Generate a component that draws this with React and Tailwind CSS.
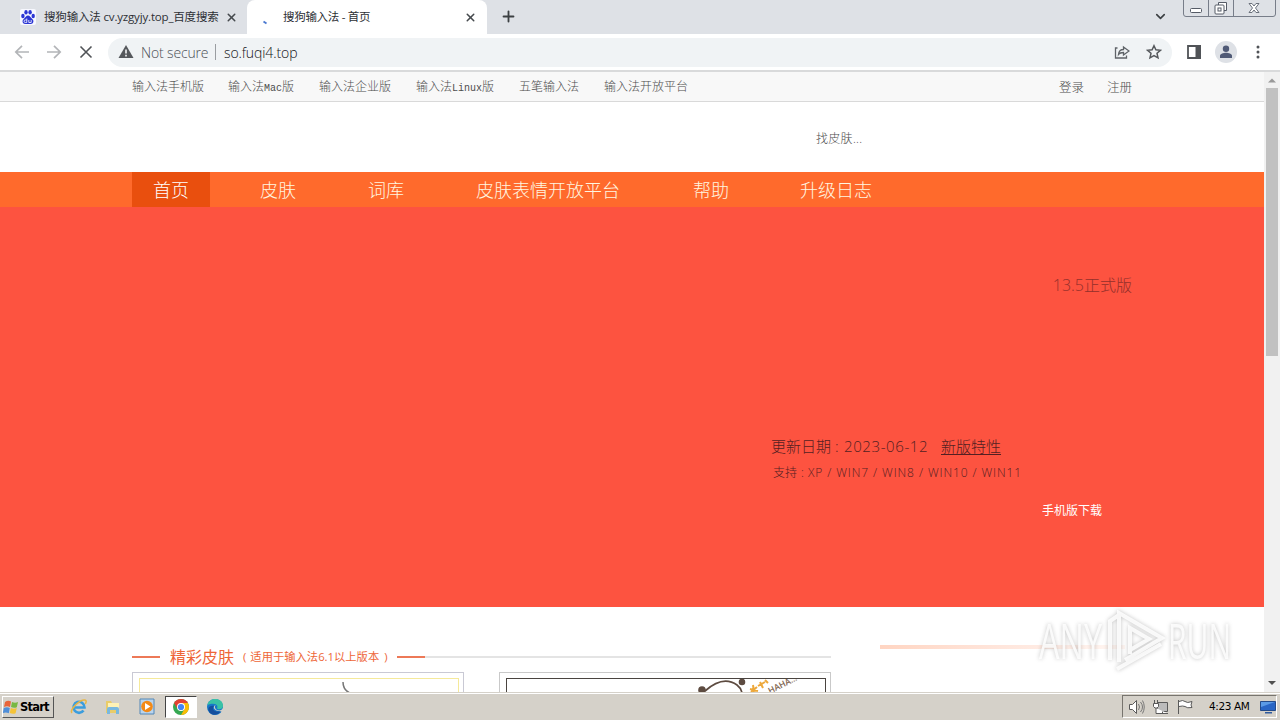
import { ChevronDown, Plus, X } from "lucide-react";

const topLinks = [
  { label: "输入法手机版", className: "w-[72px]" },
  { mixed: ["输入法", "Mac", "版"], className: "w-[67px]" },
  { label: "输入法企业版", className: "w-[73px]" },
  { mixed: ["输入法", "Linux", "版"], className: "w-[79px]" },
  { label: "五笔输入法", className: "w-[61px]" },
  { label: "输入法开放平台", className: "w-[85px]" },
];

const navLinks = [
  { label: "皮肤", className: "ml-[50px] w-[36px]" },
  { label: "词库", className: "ml-[72px] w-[36px]" },
  { label: "皮肤表情开放平台", className: "ml-[72px] w-[145px]" },
  { label: "帮助", className: "ml-[72px] w-[36px]" },
  { label: "升级日志", className: "ml-[71px] w-[74px]" },
];

export default function App() {
  return (
    <div className="flex h-[720px] w-[1280px] flex-col overflow-hidden bg-white font-['Open_Sans','Noto_Sans_CJK_SC',sans-serif] whitespace-nowrap">
      <TabStrip />
      <Toolbar />
      <div className="flex h-[620px] shrink-0">
        <main className="h-[620px] w-[1264px] overflow-hidden">
          <TopBar />
          <Search />
          <Nav />
          <Hero />
          <Skins />
        </main>
        <Scrollbar />
      </div>
      <Taskbar />
    </div>
  );
}

function TabStrip() {
  return (
    <div className="flex h-[34px] shrink-0 bg-[#dee1e6] text-[11.5px] leading-[34px] text-[#2d3035]">
      <div className="flex w-[247px] items-center rounded-br-lg pl-5">
        <BaiduIcon />
        <span className="ml-2 w-[176px] tracking-[-0.170px]">搜狗输入法 cv.yzgyjy.top_百度搜索</span>
        <X size={13} strokeWidth={2.8} className="ml-[5px] text-[#45494d]" />
      </div>
      <div className="flex w-[240px] items-center rounded-t-lg bg-white pl-[14px]">
        <svg width="16" height="16" viewBox="0 0 16 16">
          <path d="M2.500 12.500l3 2" stroke="#4a78d0" strokeWidth="1.800" />
        </svg>
        <span className="ml-[6px] w-[181px] tracking-[-0.300px]">搜狗输入法 - 首页</span>
        <X size={13} strokeWidth={2.8} className="text-[#45494d]" />
      </div>
      <Plus size={17} strokeWidth={2.6} className="mt-2 ml-[13px] text-[#3c4043]" />
      <ChevronDown size={15} strokeWidth={2.6} className="mt-[9px] ml-[636px] text-[#3c4043]" />
      <svg width="94" height="18" viewBox="0 0 94 18" className="ml-[15px]" fill="none" stroke="#777d89">
        <path d="M.5 0v14q0 2.500 2.500 2.500h87q2.500 0 2.500-2.500V0M25.500 0v16M50.500 0v16" />
        <rect x="7.500" y="8.500" width="11" height="4" rx="1" fill="#fff" stroke="#555b66" />
        <path d="M35.500 5.500v-3h8v8h-3" fill="#fff" stroke="#555b66" />
        <rect x="32" y="5" width="9" height="9" rx="1" fill="#fff" stroke="#555b66" />
        <rect x="35" y="8" width="3" height="3" stroke="#555b66" />
        <path d="M66 3.500h3l2 2.500 2-2.500h3l-3.500 4.500 3.500 4.500h-3L71 10l-2 2.500h-3L69.500 8z" fill="#fff" stroke="#6b717c" />
      </svg>
    </div>
  );
}

function BaiduIcon() {
  return (
    <svg width="16" height="16" viewBox="0 0 16 16">
      <rect width="16" height="16" rx="2" fill="#f7f8ff" />
      <g fill="#2b36d4">
        <ellipse cx="2.900" cy="7" rx="1.700" ry="2.200" />
        <ellipse cx="6" cy="3.200" rx="1.700" ry="2.300" />
        <ellipse cx="10.100" cy="3.200" rx="1.700" ry="2.300" />
        <ellipse cx="13.200" cy="7" rx="1.700" ry="2.200" />
        <path d="M8 6.500c2 0 2.500 2 4.300 3.600 2.200 2 .8 4.900-1.300 4.900H5c-2.300 0-3.400-3-1.300-4.900C5.500 8.500 6 6.500 8 6.500z" />
      </g>
      <path d="M6.800 9.500v4H5.300a1.200 1.200 0 0 1 0-2.500h1.500M8.800 11v2.500h2.400V11" fill="none" stroke="#fff" strokeWidth=".8" />
    </svg>
  );
}

function Toolbar() {
  return (
    <div className="flex h-[38px] shrink-0 items-center border-b-2 border-[#d9dadb] bg-white pl-[14px]">
      <svg width="80" height="16" viewBox="0 0 80 16" fill="none" strokeWidth="1.700">
        <path d="M15 8H2M8 1.800L1.800 8 8 14.200M33 8h13M40 1.800L46.200 8 40 14.200" stroke="#b3b5b8" />
        <path d="M66.500 2.500l11 11M77.500 2.500l-11 11" stroke="#505357" strokeWidth="1.600" />
      </svg>
      <div className="ml-[14px] flex h-[29px] w-[1064px] items-center rounded-full bg-[#f0f3f5] pl-[10px] text-[14px] font-light">
        <svg width="16" height="14" viewBox="0 0 16 14">
          <path d="M8 0l7.500 13H.5z" fill="#55585c" />
          <path d="M8 4.500v4M8 9.800v1.700" stroke="#fff" strokeWidth="1.500" />
        </svg>
        <span className="ml-[7px] w-[74px] tracking-[-0.150px] text-[#4c5055]">Not secure</span>
        <span className="h-4 w-px bg-[#9a9da1]" />
        <span className="ml-2 w-[890px] tracking-[-0.100px] text-[#101114]">so.fuqi4.top</span>
        <svg width="16" height="16" viewBox="0 0 16 16" fill="none" stroke="#5f6368" strokeWidth="1.300">
          <path d="M3.500 4H1.500v10h11v-2.500M4.500 10.500c.3-3.500 2.300-5 5-5V3l5.500 4-5.500 4V8.500c-2 0-3.800.3-5 2z" />
        </svg>
        <svg width="16" height="16" viewBox="0 0 16 16" className="ml-[16px]" fill="none" stroke="#55585c" strokeWidth="1.500">
          <path d="M8 1.700l1.900 4.100 4.500.5L11 9.300l1 4.500L8 11.500l-4 2.300 1-4.500-3.400-3 4.500-.5z" />
        </svg>
      </div>
      <svg width="14" height="14" viewBox="0 0 14 14" className="ml-[15px]">
        <path d="M1 1h12v12H1z" fill="#fff" stroke="#505357" strokeWidth="1.800" />
        <path d="M8.500 0H14v14H8.500z" fill="#505357" />
      </svg>
      <svg width="22" height="22" viewBox="0 0 22 22" className="ml-[14px]">
        <circle cx="11" cy="11" r="11" fill="#dee1e6" />
        <circle cx="11" cy="7.800" r="3.200" fill="#505a76" />
        <path d="M5 17v-2.200c0-2 3.500-3 6-3s6 1 6 3V17z" fill="#505a76" />
      </svg>
      <svg width="4" height="14" viewBox="0 0 4 14" className="ml-[19px]" fill="#505357">
        <circle cx="2" cy="2" r="1.500" />
        <circle cx="2" cy="7" r="1.500" />
        <circle cx="2" cy="12" r="1.500" />
      </svg>
    </div>
  );
}

function TopBar() {
  return (
    <div className="flex h-[30px] border-b border-[#d9d9d9] bg-[#f8f8f8] pl-[132px] text-[12px] leading-[30px] font-light text-[#4d4d4d]">
      <div className="flex w-[927px] gap-[24px]">
        {topLinks.map((link, i) => (
          <a key={i} className={link.className}>
            {link.label}
            {link.mixed && (
              <>
                {link.mixed[0]}
                <span className="font-['Liberation_Mono',monospace] text-[10px]">{link.mixed[1]}</span>
                {link.mixed[2]}
              </>
            )}
          </a>
        ))}
      </div>
      <a className="w-[48px] text-[12.500px] leading-[31px]">登录</a>
      <a className="text-[12.500px] leading-[31px]">注册</a>
    </div>
  );
}

function Search() {
  return <div className="h-[70px] pl-[816px] text-[12px] leading-[73px] font-light tracking-[0.300px] text-[#4d4d4d]">找皮肤...</div>;
}

function Nav() {
  return (
    <nav className="flex h-[35px] bg-[#ff6a2c] pl-[132px] text-[18px] leading-[36px] font-light text-[#fff6e0]">
      <a className="w-[78px] bg-[#e94f0e] text-center text-white">首页</a>
      {navLinks.map((link) => (
        <a key={link.label} className={link.className}>{link.label}</a>
      ))}
    </nav>
  );
}

function Hero() {
  return (
    <section className="flex h-[400px] flex-col bg-[#fd5340] font-light text-[#541f22]">
      <p className="mt-[66px] mr-[132px] self-end text-[16px] leading-6 text-[#94302b]">13.5正式版</p>
      <div className="mt-[137px] flex h-6 pl-[771px] text-[15px] leading-6">
        <span className="w-[73px]">更新日期<span className="ml-1">:</span></span>
        <span className="w-[97px] tracking-[0.600px]">2023-06-12</span>
        <a className="underline underline-offset-2">新版特性</a>
      </div>
      <p className="mt-[3px] pl-[773px] text-[12px] leading-6">
        支持<span className="mx-[4px]">:</span>
        <span className="tracking-[0.900px]">XP / WIN7 / WIN8 / WIN10 / WIN11</span>
      </p>
      <a className="mt-[14px] pl-[1042px] text-[12px] leading-6 font-normal text-white">手机版下载</a>
    </section>
  );
}

function Skins() {
  return (
    <section className="relative flex h-[85px] pt-[38px] pl-[132px]">
      <div className="w-[699px]">
        <div className="flex h-[24px] items-center text-[#ee6637]">
          <span className="h-[2px] w-[28px] bg-[#ed7957]" />
          <span className="ml-[10px] w-[65px] text-[16px] leading-6">精彩皮肤</span>
          <span className="w-[153px] pl-2 text-[11.300px] leading-6">
            (<span className="mr-[5px] ml-[4px]">适用于输入法6.1以上版本</span>)
          </span>
          <span className="ml-[9px] h-[2px] w-[28px] bg-[#ed7957]" />
          <span className="h-[2px] grow bg-[#e4e4e4]" />
        </div>
        <div className="mt-[3px] flex justify-between">
          <div className="h-[40px] w-[332px] border border-[#c9c9d4] pt-[5px] pr-[4px] pl-[6px]">
            <div className="h-[40px] border border-[#f5e99a]">
              <svg width="317" height="14" viewBox="0 0 317 14" fill="none" stroke="#777" strokeWidth="1.500">
                <path d="M203 3q0 8 7 11" />
              </svg>
            </div>
          </div>
          <div className="h-[40px] w-[332px] border border-[#c9c9c9] pt-[5px] pr-[4px] pl-[6px]">
            <div className="h-[40px] border border-[#4a4440]">
              <PandaArt />
            </div>
          </div>
        </div>
      </div>
      <div className="ml-[49px] h-[4px] w-[245px] bg-linear-to-r from-[#ffd5c2] via-[#ffe6dc] to-[#fff6f2]" />
      <Watermark />
    </section>
  );
}

function PandaArt() {
  return (
    <svg width="317" height="14" viewBox="0 0 317 14">
      <path d="M198 12Q216-4 230 6q4 3 5 8" fill="none" stroke="#5d4b40" strokeWidth="1.700" />
      <circle cx="195" cy="11" r="3.800" fill="#5d4b40" />
      <circle cx="235" cy="3" r="3.300" fill="#5d4b40" />
      <path d="M243 10l8 2M246 6l1 7M253 3l3 6M251 7l7-4M258 1l3 3M244 13l6-5" stroke="#eda83b" strokeWidth="2" />
      <text x="263" y="15" transform="rotate(-27 263 15)" className="font-['Open_Sans',sans-serif] text-[8.500px] font-semibold" fill="#806650">HAHA...</text>
    </svg>
  );
}

function Watermark() {
  return (
    <svg width="210" height="72" viewBox="0 0 210 72" className="absolute top-0 left-[1034px] drop-shadow-[0_0_2px_rgba(80,80,80,0.400)]">
      <g fill="#fff" fillOpacity="0.850" className="font-['Open_Sans',sans-serif] text-[49px]">
        <text x="5" y="52" textLength="63" lengthAdjust="spacingAndGlyphs">ANY</text>
        <text x="134" y="52" textLength="63" lengthAdjust="spacingAndGlyphs">RUN</text>
      </g>
      <g fill="none" stroke="#fff" strokeOpacity="0.850" strokeWidth="4">
        <path d="M76 53V14l9-6M85 55V6l43 25-37 22M83 62l44-25M96 47V21l19 11-19 11" />
      </g>
    </svg>
  );
}

function Scrollbar() {
  return (
    <div className="flex h-[620px] w-4 flex-col items-center justify-between bg-[#f1f1f1]">
      <div>
        <svg width="16" height="16" viewBox="0 0 16 16"><path d="M4 10.500l4-4 4 4z" fill="#999" /></svg>
        <div className="mx-[2px] h-[268px] bg-[#c1c1c1]" />
      </div>
      <svg width="16" height="16" viewBox="0 0 16 16"><path d="M4 5l4 4 4-4z" fill="#505050" /></svg>
    </div>
  );
}

function Taskbar() {
  return (
    <div className="flex h-7 shrink-0 items-center border-t border-[#d5d1c9] bg-[#d5d1c9] font-['DejaVu_Sans',sans-serif] shadow-[inset_0_1px_0_#fff]">
      <div className="ml-[2px] flex h-[22px] w-[52px] items-center border border-t-white border-r-[#555] border-b-[#555] border-l-white text-[11.500px] font-bold tracking-[-0.800px] text-black">
        <svg width="17" height="16" viewBox="0 0 17 16">
          <path d="M2 3q3-2 6-.5L7 8Q4 6.500 1 8z" fill="#e8643a" />
          <path d="M9 3q3 1.500 6 0l-1.200 5.200Q11 9.500 8 8z" fill="#78b843" />
          <path d="M.8 9Q4 7.500 6.800 9l-1 5.200Q3 13-.2 14z" fill="#4f8ed8" />
          <path d="M7.800 9q3 1.500 6 0l-1.200 5.200Q10 15.500 6.800 14z" fill="#f5c336" />
        </svg>
        <span className="relative top-px">Start</span>
      </div>
      <svg width="18" height="18" viewBox="0 0 18 18" className="ml-[16px]">
        <path d="M13.500 12.500A5.500 5.500 0 1 1 14.500 9.500H5" fill="none" stroke="#3b9ddd" strokeWidth="2.600" />
        <path d="M2 15C-1 12 10 1 15 2c2 .4 1 3 0 4" fill="none" stroke="#e8b644" strokeWidth="1.500" />
      </svg>
      <svg width="18" height="18" viewBox="0 0 18 18" className="ml-4">
        <path d="M2 3h5l1 2h6v10H2z" fill="#e9cc69" />
        <path d="M4 5h11v6H4z" fill="#fff2b5" />
        <path d="M3 16v-5q0-2 2-2h8q2 0 2 2v5h-3v-4H6v4z" fill="#79b8df" />
      </svg>
      <svg width="17" height="17" viewBox="0 0 17 17" className="ml-[17px]">
        <path d="M1 1h14v15H1z" fill="#b9d4ed" stroke="#5387b6" />
        <circle cx="8" cy="8.500" r="5.800" fill="#f38a17" />
        <path d="M6 5v7l5.500-3.500z" fill="#fff" />
      </svg>
      <div className="ml-[9px] flex h-[22px] w-[32px] items-center justify-center border border-t-[#444] border-r-white border-b-white border-l-[#444] bg-white">
        <ChromeIcon />
      </div>
      <svg width="18" height="18" viewBox="0 0 18 18" className="ml-[9px]">
        <circle cx="9" cy="9" r="8" fill="#1678c8" />
        <path d="M1.500 7C3-1 17-1 17 8c0 4-6 4-6 2 2-3-3-6-9.500-3z" fill="#39c2a5" />
        <path d="M8 8c-3 3 1 7 7 5-2 4-8 5-11 2S2 7 8 8z" fill="#154f9d" />
        <path d="M10 7c-2 1-1 4 1 5 3 1 5 0 6-2v4l-4-1c-5 0-7-5-3-6z" fill="#d5d1c9" />
      </svg>
      <div className="ml-[898px] flex h-[23px] w-[155px] items-center border border-t-[#77746e] border-r-white border-b-white border-l-[#77746e] pl-[5px]">
        <svg width="68" height="18" viewBox="0 0 68 18" fill="#fff" stroke="#5a5a5a">
          <path d="M1.500 6.500h3l4-4v13l-4-4h-3z" />
          <path d="M10.500 6q2 3 0 6M12.500 4q4 5 0 10M14.500 2.500q3.500 6.500 0 13" fill="none" stroke="#777" />
          <path d="M29.500 4.500h10v9h-10z" fill="#bbb" />
          <path d="M26.500 2v3M29.500 2v3M25.500 5.500h5v3l-1.500 1.500h-2L25.500 8.500zM28 10v5.500h12M34.500 13.500v2" />
          <path d="M50.500 2v14M51 3.500q4-2 6 0 2 2 7 0-2 4 0 6-5 1-7-1-2-1-6 0" />
        </svg>
        <span className="ml-[13px] w-[48px] text-[10.500px] tracking-[-0.400px] text-black">4:23 AM</span>
        <svg width="16" height="14" viewBox="0 0 16 14" className="ml-[3px]">
          <path d="M.5 1.500h15v9H.5z" fill="#2865c5" stroke="#244b8a" />
          <path d="M1 2h14L1 7z" fill="#5a9ae6" />
          <path d="M5 12h7v1.500H5z" fill="#305b9d" />
        </svg>
      </div>
    </div>
  );
}

function ChromeIcon() {
  return (
    <svg width="16" height="16" viewBox="0 0 16 16">
      <circle cx="8" cy="8" r="8" fill="#35a852" />
      <path d="M8 8L1.100 4A8 8 0 0 1 14.900 4z" fill="#e34133" />
      <path d="M8 4h6.900A8 8 0 0 1 8 16l3.500-6z" fill="#fbbc05" />
      <path d="M1.100 4l3.500 6L8 8V4z" fill="#e34133" />
      <circle cx="8" cy="8" r="4" fill="#fff" />
      <circle cx="8" cy="8" r="3.100" fill="#4285f4" />
    </svg>
  );
}
